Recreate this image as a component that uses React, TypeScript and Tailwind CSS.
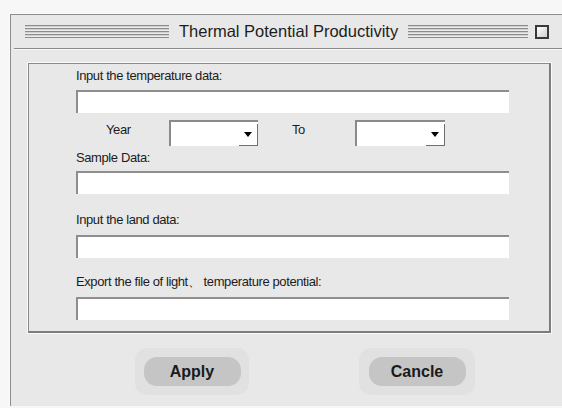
import React from 'react'

// Grooved title-bar stripes
function Stripes({ className }: { className: string }) {
  return (
    <div
      className={`h-[13px] bg-[repeating-linear-gradient(to_bottom,#8c8c8c_0px,#8c8c8c_1px,#d2d2d2_1px,#d2d2d2_2px,#ececec_2px,#ececec_3px)] ${className}`}
    />
  )
}

function Field() {
  return <div className="h-[23px] w-[433px] border-t-2 border-l-2 border-[#8e8e8e] bg-white" />
}

function Combo({ w }: { w: string }) {
  return (
    <div className={`relative h-[26px] ${w} border-t-2 border-l-2 border-[#8a8a8a] bg-white`}>
      <div className="absolute right-0 bottom-0 flex h-[22px] w-[19px] items-center justify-center border-r border-b border-[#6f6f6f]">
        <div className="h-0 w-0 border-x-[4px] border-t-[5px] border-x-transparent border-t-black" />
      </div>
    </div>
  )
}

function Label({ children, className = '' }: { children: React.ReactNode; className?: string }) {
  return <div className={`text-[13px] leading-[16px] tracking-[-0.4px] text-[#1c1c1c] ${className}`}>{children}</div>
}

function PillButton({ label, w }: { label: string; w: string }) {
  return (
    <div className={`flex h-[47px] ${w} items-center justify-center rounded-[12px] bg-[#e1e1e1]`}>
      <button className="h-[29px] w-[97px] rounded-[13px] bg-[#c5c5c5] text-[16px] font-bold text-[#1a1a1a]">
        {label}
      </button>
    </div>
  )
}

export default function App() {
  return (
    <div className="h-[408px] w-[562px] overflow-hidden bg-[#f7f7f7] pt-[13px] pl-[9px] font-['Liberation_Sans',Arial,sans-serif]">
      <div className="h-[393px] w-[570px] border-t border-l border-[#fbfbfb] bg-[#e8e8e8]">
        <div className="h-full border-t border-l border-[#8d8d8d]">
          {/* title bar */}
          <div className="flex h-[33px] items-center pl-[14px]">
            <Stripes className="w-[144px]" />
            <div className="mx-[10px] text-[16.5px] leading-none text-[#1d1d1d]">Thermal Potential Productivity</div>
            <Stripes className="w-[120px]" />
            <div className="ml-[7px] h-[14px] w-[14px] border-2 border-[#3a3a3a] bg-[linear-gradient(135deg,#ffffff,#cfcfcf)]" />
          </div>
          <div className="ml-[3px] h-px bg-[#8a8a8a]" />
          <div className="ml-[3px] h-px bg-[#f8f8f8]" />

          {/* form panel */}
          <div className="mt-[12px] ml-[16px] w-[525px] border border-[#fafafa]">
            <div className="flex h-[270px] flex-col border-t border-l border-[#8a8a8a] border-r-2 border-b-2 border-r-[#7c7c7c] border-b-[#7c7c7c] pt-[4px] pl-[47px]">
              <Label>Input the temperature data:</Label>
              <div className="mt-[6px]">
                <Field />
              </div>
              <div className="mt-[7px] flex items-start pl-[30px]">
                <Label className="mt-[2px] w-[63px]">Year</Label>
                <Combo w="w-[89px]" />
                <Label className="mt-[2px] ml-[34px] w-[63px]">To</Label>
                <Combo w="w-[90px]" />
              </div>
              <Label className="mt-[4px]">Sample Data:</Label>
              <div className="mt-[5px]">
                <Field />
              </div>
              <Label className="mt-[18px]">Input the land data:</Label>
              <div className="mt-[7px]">
                <Field />
              </div>
              <Label className="mt-[16px]">Export the file of light、 temperature potential:</Label>
              <div className="mt-[7px]">
                <Field />
              </div>
            </div>
          </div>

          {/* actions */}
          <div className="mt-[14px] flex pl-[124px]">
            <PillButton label="Apply" w="w-[114px]" />
            <div className="ml-[110px]">
              <PillButton label="Cancle" w="w-[116px]" />
            </div>
          </div>
        </div>
      </div>
    </div>
  )
}
